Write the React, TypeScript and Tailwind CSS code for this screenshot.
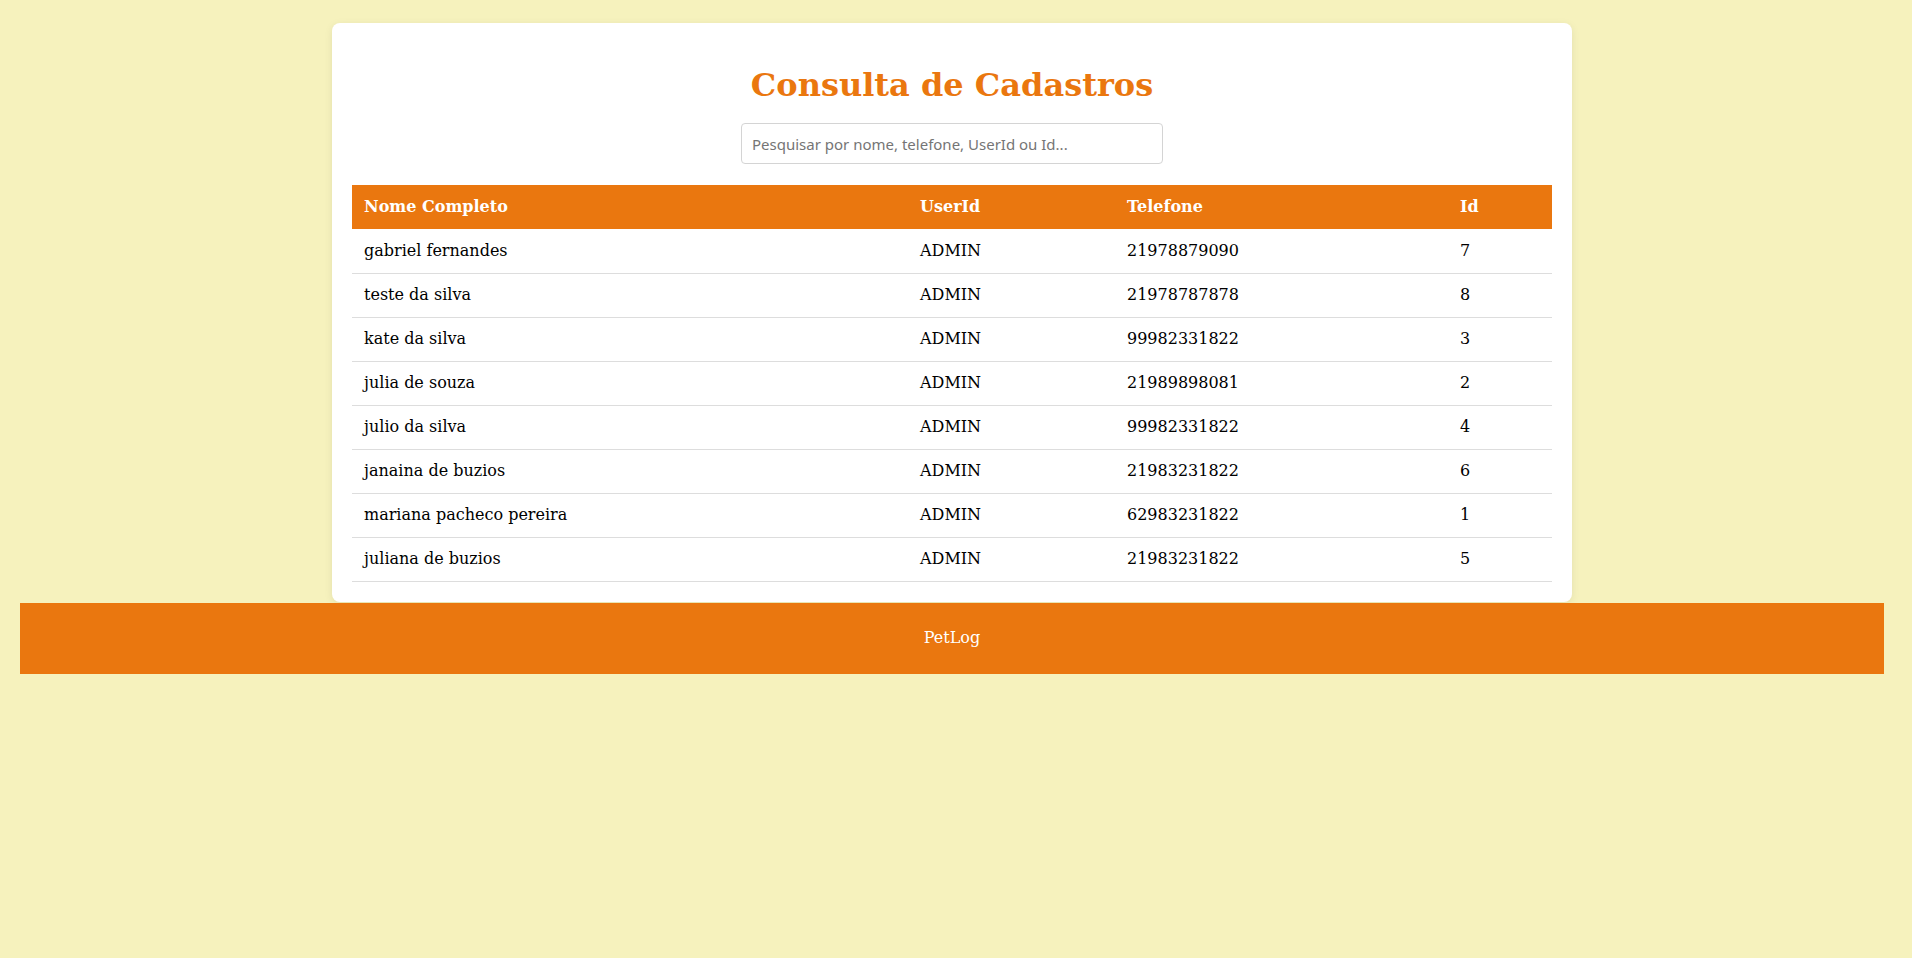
import React, { useState } from 'react';

type Cadastro = {
  nome: string;
  userId: string;
  telefone: string;
  id: number;
};

const cadastros: Cadastro[] = [
  { nome: 'gabriel fernandes', userId: 'ADMIN', telefone: '21978879090', id: 7 },
  { nome: 'teste da silva', userId: 'ADMIN', telefone: '21978787878', id: 8 },
  { nome: 'kate da silva', userId: 'ADMIN', telefone: '99982331822', id: 3 },
  { nome: 'julia de souza', userId: 'ADMIN', telefone: '21989898081', id: 2 },
  { nome: 'julio da silva', userId: 'ADMIN', telefone: '99982331822', id: 4 },
  { nome: 'janaina de buzios', userId: 'ADMIN', telefone: '21983231822', id: 6 },
  { nome: 'mariana pacheco pereira', userId: 'ADMIN', telefone: '62983231822', id: 1 },
  { nome: 'juliana de buzios', userId: 'ADMIN', telefone: '21983231822', id: 5 },
];

export default function App() {
  const [busca, setBusca] = useState('');

  const termo = busca.trim().toLowerCase();
  const filtrados = cadastros.filter(c =>
    !termo ||
    c.nome.toLowerCase().includes(termo) ||
    c.telefone.includes(termo) ||
    c.userId.toLowerCase().includes(termo) ||
    String(c.id) === termo
  );

  return (
    <div className="min-h-screen bg-[#f6f2bd] [font-family:'DejaVu_Serif',serif]">
      <div className="w-[1904px] pt-[23px]">
        {/* Card principal */}
        <div className="mx-auto w-[1240px] bg-white rounded-lg shadow-[0_2px_8px_rgba(0,0,0,0.08)] p-5">
          <h1 className="text-center text-[32px] font-bold text-[#ea770f] mt-[24px] mb-[19px] leading-[37px]">
            Consulta de Cadastros
          </h1>
          <div className="flex justify-center">
            <input
              type="text"
              value={busca}
              onChange={e => setBusca(e.target.value)}
              placeholder="Pesquisar por nome, telefone, UserId ou Id..."
              className="w-[422px] h-[41px] px-2.5 border border-[#d4d4d4] rounded bg-white text-[15px] text-gray-900 placeholder:text-[#757575] outline-none [font-family:'Noto_Sans',sans-serif]"
            />
          </div>
          <table className="w-full mt-[21px] border-collapse text-left text-base">
            <thead>
              <tr className="bg-[#ea770f] text-white h-[44px]">
                <th className="w-[556px] px-3 font-bold">Nome Completo</th>
                <th className="w-[207px] px-3 font-bold">UserId</th>
                <th className="w-[333px] px-3 font-bold">Telefone</th>
                <th className="px-3 font-bold">Id</th>
              </tr>
            </thead>
            <tbody className="text-black">
              {filtrados.map(c => (
                <tr key={c.id} className="h-[44px] border-b border-[#dddddd]">
                  <td className="px-3">{c.nome}</td>
                  <td className="px-3">{c.userId}</td>
                  <td className="px-3">{c.telefone}</td>
                  <td className="px-3">{c.id}</td>
                </tr>
              ))}
            </tbody>
          </table>
        </div>
        {/* Rodapé */}
        <footer className="mx-5 mt-px h-[71px] bg-[#ea770f] flex items-center justify-center text-white text-base">
          PetLog
        </footer>
      </div>
    </div>
  );
}
